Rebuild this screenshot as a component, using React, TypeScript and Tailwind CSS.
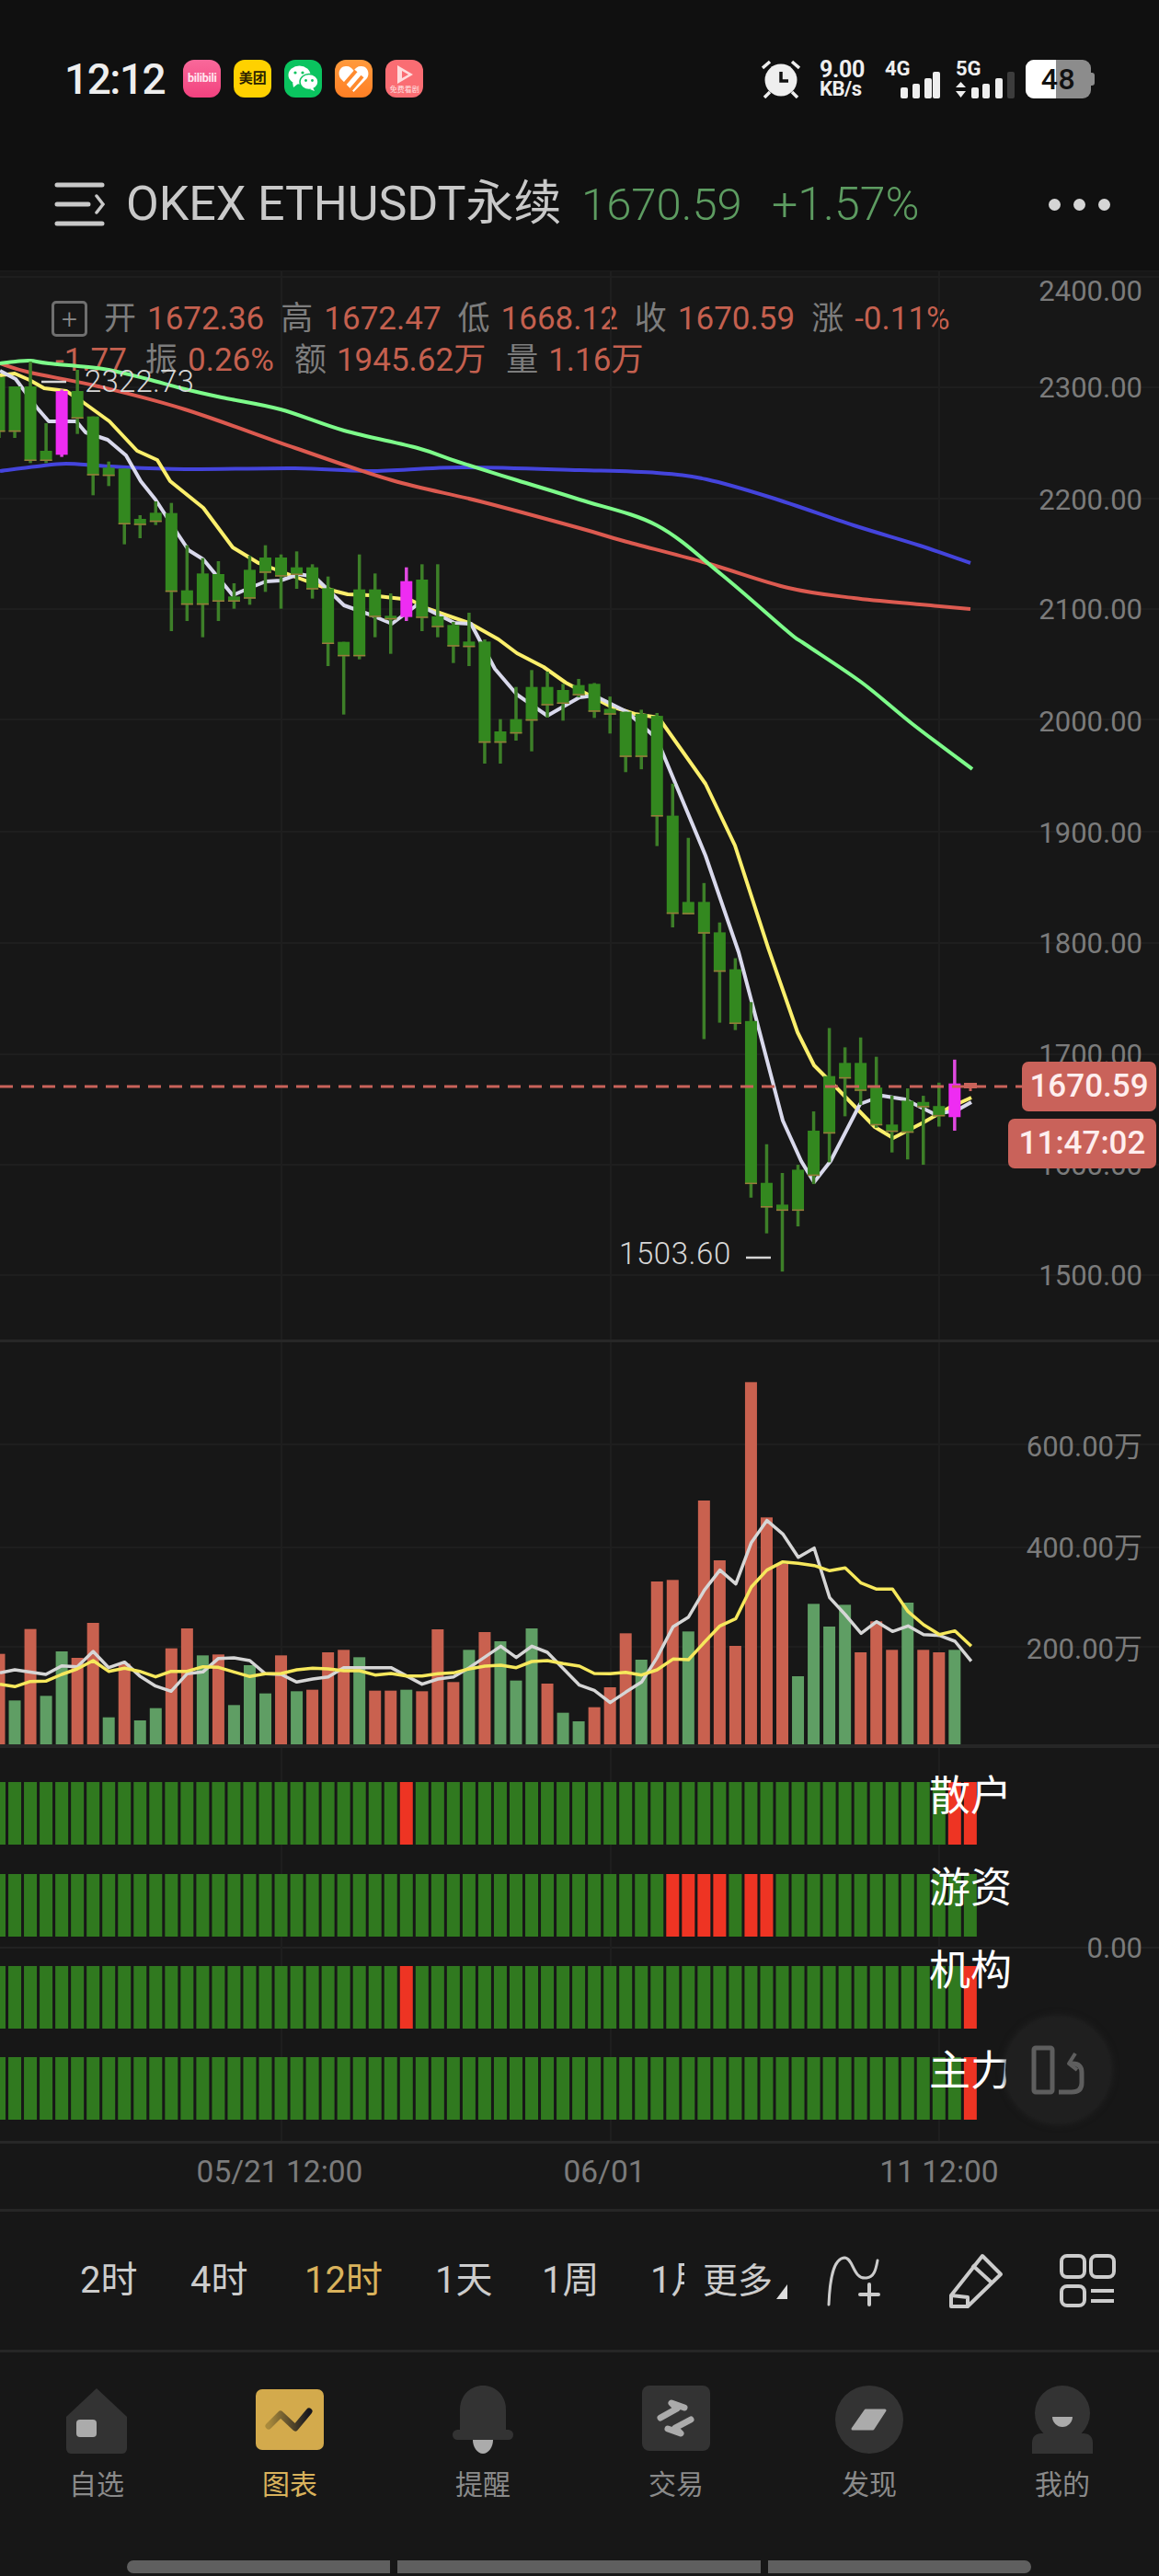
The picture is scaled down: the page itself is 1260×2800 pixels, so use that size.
import React from 'react';

// candle step in the chart, in page pixels
const STEP = 17.03;
const barX = (i: number) => -1 + STEP * i;

// [wickTop, bodyTop, bodyBottom, wickBottom], read off the reference
const upperCandles = [
  [30, 30, 208, 228], [60, 60, 208, 228], [-21, 60, 303, 310], [180, 270, 303, 310], [70, 75, 283, 290],
  [6, 75, 165, 215], [158, 158, 350, 415], [305, 325, 352, 385], [328, 328, 510, 575], [480, 492, 512, 555],
  [435, 472, 502, 512], [440, 473, 730, 858], [578, 725, 772, 825], [620, 670, 772, 878], [630, 672, 762, 825],
  [702, 745, 762, 785], [612, 658, 752, 772], [578, 618, 668, 730], [608, 618, 680, 785], [598, 650, 675, 720],
  [640, 650, 722, 752], [680, 718, 900, 972], [893, 893, 940, 1130], [608, 722, 940, 950], [670, 722, 812, 878],
  [735, 808, 820, 932], [650, 695, 812, 825], [640, 690, 815, 858], [640, 810, 845, 878], [828, 838, 908, 962],
  [798, 892, 910, 972], [885, 892, 1222, 1290], [1145, 1185, 1222, 1290], [1040, 1145, 1192, 1215], [985, 1040, 1150, 1250],
  [990, 1040, 1100, 1140], [1030, 1050, 1095, 1150],
].map((c) => c.map((y) => 400 + y / 3));

const lowerCandles = [
  [85, 100, 125, 130], [95, 97, 165, 180], [128, 158, 172, 218], [165, 165, 275, 312], [160, 170, 275, 305],
  [168, 175, 420, 492], [340, 418, 657, 690], [472, 628, 658, 658], [582, 628, 705, 962], [678, 702, 798, 922],
  [765, 792, 925, 940], [872, 918, 1315, 1348], [1218, 1312, 1372, 1435], [1288, 1365, 1380, 1528], [1268, 1280, 1380, 1418],
  [1138, 1185, 1295, 1315], [935, 1052, 1192, 1262], [982, 1020, 1058, 1150], [958, 1020, 1088, 1122], [1005, 1080, 1172, 1178],
  [1100, 1170, 1188, 1238], [1082, 1112, 1190, 1255], [1100, 1115, 1128, 1268], [1068, 1125, 1150, 1175], [1012, 1070, 1152, 1185],
].map((c) => c.map((y) => 700 + y / 2.24));

const candles = [...upperCandles, ...lowerCandles];
const MAGENTA = [4, 26, 61];

const line = (pts: number[][]) => pts.map((p) => p.join(',')).join(' ');

// catmull-rom through the points, the slow averages in the picture have no corners
const smooth = (pts: number[][]) => {
  let d = `M${pts[0][0]} ${pts[0][1]}`;
  for (let i = 0; i < pts.length - 1; i++) {
    const p0 = pts[Math.max(i - 1, 0)];
    const p1 = pts[i];
    const p2 = pts[i + 1];
    const p3 = pts[Math.min(i + 2, pts.length - 1)];
    d += `C${p1[0] + (p2[0] - p0[0]) / 6} ${p1[1] + (p2[1] - p0[1]) / 6} ${p2[0] - (p3[0] - p1[0]) / 6} ${p2[1] - (p3[1] - p1[1]) / 6} ${p2[0]} ${p2[1]}`;
  }
  return d;
};

const maGreen = [[0,395],[17,393],[33,392],[53,395],[112,401],[160,412],[197,422],[241,432],[305,445],[374,468],[454,487],[498,502],[562,522],[630,543],[714,571],[785,625],[857,687],[875,700],[937,742],[992,787],[1057,836]];
const maBlue = [[0,512],[40,507],[72,504],[120,507],[201,510],[321,509],[402,512],[502,508],[630,511],[714,514],[768,521],[839,541],[928,571],[1000,593],[1055,612]];
const maRed = [[0,395],[33,405],[107,420],[201,445],[321,487],[426,522],[522,545],[630,574],[678,588],[768,612],[857,639],[928,650],[1000,657],[1055,662]];
const maYellow = [[0,408],[16,406],[32,413],[48,422],[72,425],[90,437],[119,458],[149,490],[171,500],[185,523],[221,552],[253,595],[281,612],[321,627],[362,642],[378,646],[402,647],[446,652],[466,662],[510,677],[542,695],[562,710],[591,725],[615,742],[630,750],[662,767],[690,776],[716,780],[767,852],[799,919],[835,1030],[867,1122],[885,1158],[911,1184],[951,1225],[971,1237],[1004,1220],[1032,1204],[1056,1193]];
const maWhite = [[0,403],[17,412],[40,443],[53,458],[83,458],[93,470],[117,478],[137,495],[153,523],[169,543],[193,580],[205,598],[221,608],[253,647],[269,640],[289,632],[305,631],[325,624],[342,627],[374,658],[402,668],[426,678],[454,657],[494,677],[512,678],[538,727],[562,755],[595,778],[630,758],[646,756],[682,774],[714,803],[767,930],[803,1035],[823,1111],[851,1218],[871,1262],[885,1285],[903,1262],[935,1200],[959,1191],[984,1195],[1016,1211],[1040,1207],[1056,1198]];

const priceGrid = [421, 542, 662, 782, 904, 1025, 1146, 1266, 1386];
const priceLabels = [
  ['2400.00', 317], ['2300.00', 422], ['2200.00', 544], ['2100.00', 663], ['2000.00', 785],
  ['1900.00', 906], ['1800.00', 1026], ['1700.00', 1147], ['1600.00', 1267], ['1500.00', 1387],
] as const;

// volume tops, r = red, g = green
const volumes: [number, string][] = [
  [953,'r'],[1105,'g'],[872,'r'],[1090,'g'],[945,'g'],[966,'r'],[852,'r'],[1160,'g'],[985,'r'],[1170,'g'],
  [1130,'g'],[935,'r'],[870,'r'],[958,'g'],[955,'r'],[1120,'g'],[990,'g'],[1082,'g'],[958,'r'],[1075,'g'],
  [1070,'r'],[948,'r'],[940,'r'],[964,'g'],[1073,'r'],[1073,'r'],[1070,'g'],[1075,'r'],[873,'r'],[1045,'r'],
  [940,'g'],[882,'r'],[912,'g'],[1040,'g'],[870,'g'],[1050,'r'],[1145,'g'],[1173,'g'],[1127,'r'],[1062,'r'],
  [886,'r'],[972,'g'],[717,'r'],[712,'r'],[880,'g'],[453,'r'],[648,'r'],[927,'r'],[67,'r'],[508,'r'],
  [660,'r'],[1026,'g'],[790,'g'],[864,'g'],[793,'g'],[948,'r'],[847,'r'],[940,'r'],[786,'g'],[940,'r'],
  [948,'r'],[940,'g'],
];

const volWhiteL = [[0,1015],[40,1005],[124,1020],[167,992],[209,995],[252,945],[294,998],[337,980],[378,1025],[421,1058],[463,1075],[506,1018],[549,1012],[591,968],[633,966],[676,975],[718,1018],[761,1020],[803,1045],[846,1035],[888,1028],[930,998],[1058,998],[1142,1052],[1185,1035],[1227,1028],[1270,998],[1355,928],[1397,965],[1439,928],[1481,948],[1568,1055]];
const volWhiteR = [[40,1072],[83,1112],[125,1078],[168,1045],[210,965],[253,865],[295,833],[338,745],[380,680],[423,725],[465,590],[507,518],[550,562],[592,638],[635,608],[677,770],[719,825],[762,886],[804,848],[847,880],[889,862],[931,890],[974,893],[1016,912],[1060,977]];
const volYellowL = [[0,1052],[40,1060],[82,1043],[124,1042],[167,1020],[209,1002],[252,975],[294,1010],[337,1000],[378,1010],[421,1028],[463,1010],[506,1010],[549,995],[591,997],[633,1012],[676,1027],[718,1018],[761,1017],[803,1005],[846,1000],[888,1002],[930,1008],[973,1008],[1015,1022],[1058,1017],[1100,1025],[1142,1025],[1185,1018],[1227,1015],[1270,1002],[1312,993],[1355,990],[1397,998],[1439,978],[1481,975],[1524,985],[1568,993]];
const volYellowR = [[40,1017],[83,1018],[125,1013],[168,1022],[210,1005],[253,970],[295,972],[338,915],[380,862],[423,838],[465,735],[507,680],[550,653],[592,658],[635,665],[677,682],[719,673],[762,722],[804,742],[847,742],[889,815],[931,858],[974,890],[1016,878],[1060,928]];
const toLeft = (p: number[]) => [p[0] / 2.489, 1480 + p[1] / 3];
const toRight = (p: number[]) => [630 + p[0] / 2.489, 1480 + p[1] / 3];
const volWhite = [...volWhiteL.map(toLeft), ...volWhiteR.map(toRight)];
const volYellow = [...volYellowL.map(toLeft), ...volYellowR.map(toRight)];

const signalRows = [
  { y: 1937, label: '散户', labelCenter: 1953, red: [26, 61, 62] },
  { y: 2037, label: '游资', labelCenter: 2053, red: [43, 44, 45, 46, 48, 49] },
  { y: 2137, label: '机构', labelCenter: 2143, red: [26, 62] },
  { y: 2236, label: '主力', labelCenter: 2252, red: [62] },
];

const infoTop = [['开', '1672.36'], ['高', '1672.47'], ['低', '1668.12'], ['收', '1670.59'], ['涨', '-0.11%']];
const infoBottom = [['振', '0.26%'], ['额', '1945.62万'], ['量', '1.16万']];

function StatusBar() {
  return (
    <div className="h-[150px] pt-[65px] pl-[70px] pr-[70px] flex items-start">
      <span className="text-[46px] leading-[42px] font-medium tracking-[-1.5px] text-[#eeeeee]">12:12</span>
      <div className="ml-[20px] flex gap-[14px]">
        <div className="w-[41px] h-[41px] rounded-[12px] bg-gradient-to-b from-[#f9689a] to-[#f2417f] flex items-center justify-center text-[12.5px] font-bold text-[#ffe8f0] tracking-[-0.3px]">bilibili</div>
        <div className="w-[41px] h-[41px] rounded-[12px] bg-[#ffd100] flex items-center justify-center text-[15px] font-bold leading-none text-[#2b2200]">美团</div>
        <div className="w-[41px] h-[41px] rounded-[12px] bg-[#0ac45f] flex items-center justify-center">
          <svg width="33" height="29" viewBox="0 0 33 29">
            <ellipse cx="12.5" cy="10.5" rx="12" ry="10" fill="#fff" />
            <path d="M5 18l1 6 5-4z" fill="#fff" />
            <ellipse cx="23" cy="18" rx="10" ry="8.5" fill="#fff" stroke="#0ac45f" strokeWidth="1.5" />
            <path d="M27 24l2 4-5-2z" fill="#fff" />
            <circle cx="8" cy="8" r="1.6" fill="#0ac45f" /><circle cx="16" cy="8" r="1.6" fill="#0ac45f" />
            <circle cx="19.5" cy="16.5" r="1.4" fill="#0ac45f" /><circle cx="26.5" cy="16.5" r="1.4" fill="#0ac45f" />
          </svg>
        </div>
        <div className="w-[41px] h-[41px] rounded-[12px] bg-gradient-to-b from-[#ff9a3c] to-[#ff7f24] flex items-center justify-center">
          <svg width="33" height="30" viewBox="0 0 33 30">
            <path d="M16.5 29L2 14C-2 7 3 0 9 1c3 0 6 2 7.5 5C18 3 21 1 24 1c6-1 11 6 7 13z" fill="#fff" />
            <path d="M6 21L19 6M13 27L26 12" stroke="#ff8a2e" strokeWidth="4" />
          </svg>
        </div>
        <div className="w-[41px] h-[41px] rounded-[12px] bg-[#fa6d73] flex flex-col items-center overflow-hidden">
          <svg className="mt-[5px]" width="22" height="22" viewBox="0 0 22 22">
            <path d="M3 1l17 10L3 21z" fill="#ffdcdc" /><path d="M8 7l7 4-7 4z" fill="#fa6d73" />
          </svg>
          <span className="mt-[1px] text-[8px] leading-[10px] whitespace-nowrap text-[#ffe2e2]">免费看剧</span>
        </div>
      </div>

      <div className="ml-auto flex items-start">
        <svg width="42" height="42" viewBox="0 0 42 42">
          <circle cx="21" cy="22" r="17.5" fill="#eeeeee" />
          <path d="M21 13v10h8" stroke="#101010" strokeWidth="3.5" fill="none" />
          <path d="M1 9l8-7M41 9l-8-7M3 41l6-6M39 41l-6-6" stroke="#eeeeee" strokeWidth="3.5" />
        </svg>
        <div className="ml-[21px] w-[52px] flex flex-col font-bold text-[#eeeeee]">
          <span className="text-[25px] leading-[22px] tracking-[-0.3px]">9.00</span>
          <span className="text-[22px] leading-[20px] tracking-[-0.5px] whitespace-nowrap">KB/s</span>
        </div>
        <div className="ml-[19px] relative w-[60px] h-[42px]">
          <span className="absolute left-0 top-0 text-[22px] leading-[20px] font-bold text-[#eeeeee]">4G</span>
          <svg width="60" height="42" viewBox="0 0 60 42" fill="#eeeeee">
            <rect x="17" y="30" width="8" height="12" rx="2" /><rect x="30" y="26" width="8" height="16" rx="2" />
            <rect x="43" y="20" width="8" height="22" rx="2" /><rect x="52" y="13" width="8" height="29" rx="2" />
          </svg>
        </div>
        <div className="ml-[17px] relative w-[64px] h-[42px]">
          <span className="absolute left-0 top-0 text-[22px] leading-[20px] font-bold text-[#eeeeee]">5G</span>
          <svg width="64" height="42" viewBox="0 0 64 42" fill="#eeeeee">
            <path d="M0 30l5.500-6 5.500 6zM0 34h11l-5.500 7z" />
            <rect x="17" y="30" width="8" height="12" rx="2" /><rect x="29" y="26" width="8" height="16" rx="2" />
            <rect x="43" y="20" width="8" height="22" rx="2" /><rect x="56" y="13" width="8" height="29" rx="2" fill="#3c3c3c" />
          </svg>
        </div>
        <div className="ml-[12px] flex items-center">
          <div className="relative w-[71px] h-[42px] rounded-[9px] overflow-hidden bg-[#8c8c8c] flex items-center justify-center">
            <div className="absolute left-0 top-0 bottom-0 w-[33px] bg-white" />
            <span className="relative text-[32px] font-medium leading-none tracking-[0.5px] text-[#111111]">48</span>
          </div>
          <div className="w-[4px] h-[14px] rounded-r-[3px] bg-[#8c8c8c]" />
        </div>
      </div>
    </div>
  );
}

function Header() {
  return (
    <div className="h-[145px] pl-[59px] pr-[53px] flex items-center border-b border-[#1c1c1c]">
      <svg className="shrink-0" width="55" height="48" viewBox="0 0 55 48" fill="none" stroke="#c8c8c8" strokeWidth="5" strokeLinecap="round">
        <path d="M3 3h49M3 24h34M3 45h49" />
        <path d="M46 15l7 9-7 9" strokeWidth="3.500" />
      </svg>
      <span className="ml-[23px] w-[495px] shrink-0 whitespace-nowrap text-[52px] leading-none text-[#c9c9c9] tracking-[-0.1px]">OKEX ETHUSDT永续</span>
      <span className="w-[207px] shrink-0 text-[49px] leading-none font-light text-[#5d9c61]">1670.59</span>
      <span className="text-[50px] leading-none font-light text-[#5d9c61]">+1.57%</span>
      <div className="ml-auto flex gap-[14px]">
        <div className="w-[13px] h-[13px] rounded-full bg-[#d5d5d5]" />
        <div className="w-[13px] h-[13px] rounded-full bg-[#d5d5d5]" />
        <div className="w-[13px] h-[13px] rounded-full bg-[#d5d5d5]" />
      </div>
    </div>
  );
}

function InfoLegend() {
  return (
    <div className="absolute left-[56px] top-[29px] text-[35px] leading-[45px] text-[#c4604f]">
      <div className="flex items-center">
        <div className="w-[39px] h-[39px] mr-[18px] rounded-[5px] border-[3px] border-[#6f6f6f] flex items-center justify-center text-[30px] leading-none font-light text-[#8a8a8a]">+</div>
        {infoTop.map(([k, v]) => (
          <span key={k} className="mr-[18px] whitespace-nowrap">
            <span className="text-[#7d7d7d] mr-[12px]">{k}</span>{v}
          </span>
        ))}
      </div>
      <div className="flex items-center">
        <span className="w-[102px] pl-[4px] whitespace-nowrap">-1.77</span>
        {infoBottom.map(([k, v]) => (
          <span key={k} className="mr-[22px] whitespace-nowrap">
            <span className="text-[#7d7d7d] mr-[11px]">{k}</span>{v}
          </span>
        ))}
      </div>
    </div>
  );
}

function PriceChart() {
  return (
    <div className="relative h-[1164px] border-b-[3px] border-[#272727]">
      <InfoLegend />
      <svg className="absolute inset-0" width="1260" height="1161" viewBox="0 295 1260 1161">
        <line x1="0" x2="1260" y1="301" y2="301" stroke="#1e1e1e" strokeWidth="2" />
        {priceGrid.map((y) => <line key={y} x1="0" x2="1260" y1={y} y2={y} stroke="#1e1e1e" strokeWidth="2" />)}
        {[306, 664, 1021].map((x) => <line key={x} x1={x} x2={x} y1="295" y2="1456" stroke="#1e1e1e" strokeWidth="2" />)}
        <path d={smooth(maBlue)} fill="none" stroke="#4444dc" strokeWidth="4" />
        <path d={smooth(maRed)} fill="none" stroke="#dc5a50" strokeWidth="4" />
        <path d={smooth(maGreen)} fill="none" stroke="#7dfb8a" strokeWidth="4" />
        <polyline points={line(maYellow)} fill="none" stroke="#fbef6c" strokeWidth="4" strokeLinejoin="round" />
        <polyline points={line(maWhite)} fill="none" stroke="#d9d9ec" strokeWidth="4" strokeLinejoin="round" />
        {candles.map(([wt, bt, bb, wb], i) => {
          const x = barX(i);
          const fill = MAGENTA.includes(i) ? '#ee2cf2' : '#33881f';
          return (
            <g key={i}>
              <rect x={x - 1.75} y={wt} width="3.500" height={wb - wt} fill={MAGENTA.includes(i) ? '#e04ae0' : '#3d7f28'} />
              <rect x={x - 6.5} y={bt} width="13" height={bb - bt} fill={fill} />
              {!MAGENTA.includes(i) && <rect x={x - 6.5} y={bb - 1.5} width="13" height="1.500" fill="#9a7a3c" />}
            </g>
          );
        })}
        <line x1="0" x2="1111" y1="1181" y2="1181" stroke="#c9635a" strokeWidth="3" strokeDasharray="14 9" />
        <rect x="1048" y="1177" width="14" height="6" fill="#c9635a" />
        <rect x="1053.500" y="1183" width="3" height="3" fill="#c9635a" />
        <line x1="45" x2="72" y1="415" y2="415" stroke="#d5d5d5" strokeWidth="2.500" />
        <line x1="811" x2="838" y1="1367" y2="1367" stroke="#d5d5d5" strokeWidth="2.500" />
      </svg>

      <span className="absolute left-[92px] top-[100px] text-[33px] leading-[40px] font-light tracking-[0.2px] text-[#d6d6d6]">2322.73</span>
      <span className="absolute left-[673px] top-[1048px] text-[33px] leading-[40px] font-light tracking-[0.6px] text-[#d6d6d6]">1503.60</span>

      {priceLabels.map(([text, y]) => (
        <span key={text} className="absolute right-[18px] text-[31px] leading-[36px] text-[#7b7b7b]" style={{ top: y - 295 - 18 }}>{text}</span>
      ))}

      <div className="absolute right-[3px] top-[859px] w-[146px] h-[54px] rounded-[7px] bg-[#c9625a] flex items-center justify-center text-[35px] font-medium text-[#ffeeee]">1670.59</div>
      <div className="absolute right-[3px] top-[921px] w-[161px] h-[54px] rounded-[7px] bg-[#c9625a] flex items-center justify-center text-[35px] font-medium text-[#ffeeee]">11:47:02</div>
    </div>
  );
}

function VolumeChart() {
  return (
    <div className="relative h-[441px] border-b-[4px] border-[#262626]">
      <svg className="absolute inset-0" width="1260" height="437" viewBox="0 1459 1260 437">
        {[1570, 1682, 1790].map((y) => <line key={y} x1="0" x2="1260" y1={y} y2={y} stroke="#1e1e1e" strokeWidth="2" />)}
        {[306, 664, 1021].map((x) => <line key={x} x1={x} x2={x} y1="1459" y2="1896" stroke="#1e1e1e" strokeWidth="2" />)}
        {volumes.map(([top, color], i) => {
          const y = 1480 + top / 3;
          return <rect key={i} x={barX(i) - 6.5} y={y} width="13" height={1896 - y} fill={color === 'r' ? '#c9614f' : '#5f9e64'} />;
        })}
        <polyline points={line(volWhite)} fill="none" stroke="#d6d6d6" strokeWidth="3.500" strokeLinejoin="round" />
        <polyline points={line(volYellow)} fill="none" stroke="#f6e85c" strokeWidth="3.500" strokeLinejoin="round" />
      </svg>
      <span className="absolute right-[18px] top-[94px] text-[31px] leading-[40px] text-[#7b7b7b]">600.00万</span>
      <span className="absolute right-[18px] top-[204px] text-[31px] leading-[40px] text-[#7b7b7b]">400.00万</span>
      <span className="absolute right-[18px] top-[314px] text-[31px] leading-[40px] text-[#7b7b7b]">200.00万</span>
    </div>
  );
}

function SignalChart() {
  return (
    <div className="relative h-[430px] border-b-[3px] border-[#272727]">
      <svg className="absolute inset-0" width="1260" height="427" viewBox="0 1900 1260 427">
        <line x1="0" x2="1260" y1="2117" y2="2117" stroke="#222222" strokeWidth="2" />
        {[306, 664, 1021].map((x) => <line key={x} x1={x} x2={x} y1="1900" y2="2327" stroke="#1e1e1e" strokeWidth="2" />)}
        {signalRows.map((row) =>
          Array.from({ length: 63 }, (_, i) => (
            <rect key={`${row.y}-${i}`} x={barX(i) - 7} y={row.y} width="14" height="68" fill={row.red.includes(i) ? '#ee3423' : '#30791f'} />
          )),
        )}
      </svg>
      {signalRows.map((row) => (
        <span key={row.label} className="absolute left-[1010px] text-[45px] leading-[50px] text-white" style={{ top: row.labelCenter - 1900 - 25 }}>{row.label}</span>
      ))}
      <span className="absolute right-[18px] top-[200px] text-[31px] leading-[36px] text-[#7b7b7b]">0.00</span>
      <div className="absolute left-[1093px] top-[293px] w-[114px] h-[114px] rounded-full bg-[#1f1f1f] shadow-[0_0_10px_#2a2a2a] flex items-center justify-center">
        <svg width="58" height="54" viewBox="0 0 58 54" fill="none" stroke="#5e5e5e" strokeWidth="5" strokeLinejoin="round">
          <rect x="3" y="3" width="20" height="48" rx="2" />
          <path d="M30 51h14c8 0 11-4 11-10V30c0-6-3-10-10-10H42" />
          <path d="M48 9l-7 11 9 7" strokeWidth="4" />
        </svg>
      </div>
    </div>
  );
}

function TimeAxis() {
  return (
    <div className="relative h-[74px] border-b-[3px] border-[#262626] text-[33.500px] leading-[36px] text-[#7b7b7b]">
      <span className="absolute left-[304px] top-[13px] -translate-x-1/2 whitespace-nowrap">05/21 12:00</span>
      <span className="absolute left-[657px] top-[13px] -translate-x-1/2 whitespace-nowrap">06/01</span>
      <span className="absolute left-[1021px] top-[13px] -translate-x-1/2 whitespace-nowrap">11 12:00</span>
    </div>
  );
}

function Toolbar() {
  return (
    <div className="h-[153px] border-b-[3px] border-[#262626] flex items-center pl-[87px] text-[40px] leading-none text-[#cccccc]">
      <span className="w-[120px] shrink-0">2时</span>
      <span className="w-[124px] shrink-0">4时</span>
      <span className="w-[142px] shrink-0 text-[#d9b25c]">12时</span>
      <span className="w-[116px] shrink-0">1天</span>
      <span className="w-[118px] shrink-0">1周</span>
      <span className="w-[37px] shrink-0 overflow-hidden whitespace-nowrap">1月</span>
      <span className="ml-[20px] shrink-0 text-[38px]">更多</span>
      <svg className="ml-[4px] mt-[24px] shrink-0" width="12" height="16" viewBox="0 0 12 16"><path d="M12 0v16H0z" fill="#dddddd" /></svg>
      <svg className="ml-[43px] shrink-0" width="58" height="56" viewBox="0 0 58 56" fill="none" stroke="#cccccc" strokeWidth="4" strokeLinecap="round">
        <path d="M2 54C3 30 6 4 19 3c10 0 9 24 24 22 8-1 10-8 12-19" strokeWidth="3" />
        <path d="M46 32v22M36 43h20" />
      </svg>
      <svg className="ml-[74px] shrink-0" width="60" height="60" viewBox="0 0 60 60" fill="none" stroke="#cccccc" strokeWidth="4" strokeLinejoin="round">
        <path d="M37 3l20 20-36 35H3V46zM26 13l22 20M3 46l18 2v10" />
      </svg>
      <svg className="ml-[60px] shrink-0" width="62" height="60" viewBox="0 0 62 60" fill="none" stroke="#cccccc" strokeWidth="4">
        <rect x="3" y="3" width="25" height="23" rx="6" /><rect x="35" y="3" width="25" height="23" rx="6" />
        <rect x="3" y="36" width="25" height="21" rx="6" /><path d="M35 41h25M35 52h25" />
      </svg>
    </div>
  );
}

const ICON = '#333333';
const INNER = '#ababab';

const navItems: { label: string; active?: boolean; icon: React.ReactNode }[] = [
  {
    label: '自选',
    icon: (
      <svg width="66" height="74" viewBox="0 0 66 74">
        <path d="M33 3L66 34v34c0 3-2 6-5 6H5c-3 0-5-3-5-6V34z" fill={ICON} />
        <rect x="11" y="37" width="22" height="19" rx="4" fill={INNER} />
      </svg>
    ),
  },
  {
    label: '图表',
    active: true,
    icon: (
      <svg width="74" height="74" viewBox="0 0 74 74">
        <defs>
          <linearGradient id="zig" x1="0" x2="1" y1="0" y2="0">
            <stop offset="0" stopColor="#a98a3c" /><stop offset="1" stopColor="#16161e" />
          </linearGradient>
        </defs>
        <rect x="0" y="4" width="74" height="66" rx="7" fill="#d3aa4c" />
        <path d="M14 44L27 31L43 46L58 28" fill="none" stroke="url(#zig)" strokeWidth="7" strokeLinecap="round" strokeLinejoin="round" />
      </svg>
    ),
  },
  {
    label: '提醒',
    icon: (
      <svg width="66" height="74" viewBox="0 0 66 74">
        <path d="M8 52V26C8 10 20 0 33 0s25 10 25 26v26z" fill={ICON} />
        <rect x="0" y="48" width="66" height="11" rx="5.500" fill={ICON} />
        <path d="M22 59h22c0 8-5 15-11 15s-11-7-11-15z" fill={INNER} />
      </svg>
    ),
  },
  {
    label: '交易',
    icon: (
      <svg width="74" height="74" viewBox="0 0 74 74">
        <rect x="0" y="0" width="74" height="71" rx="8" fill={ICON} />
        <path d="M20 35L38 25L32 19L46 24M53 37L36 46L42 52L28 47" fill="none" stroke={INNER} strokeWidth="7" strokeLinejoin="round" strokeLinecap="round" />
      </svg>
    ),
  },
  {
    label: '发现',
    icon: (
      <svg width="74" height="74" viewBox="0 0 74 74">
        <circle cx="37" cy="37" r="37" fill={ICON} />
        <path d="M19 47L33 27H54L41 47z" fill={INNER} stroke={INNER} strokeWidth="3" strokeLinejoin="round" />
      </svg>
    ),
  },
  {
    label: '我的',
    icon: (
      <svg width="66" height="74" viewBox="0 0 66 74">
        <circle cx="33" cy="30" r="30" fill={ICON} />
        <path d="M10 52h46c6 0 10 4 10 10v12H0V62c0-6 4-10 10-10z" fill={ICON} />
        <path d="M22 34h22c0 6-5 11-11 11s-11-5-11-11z" fill={INNER} />
      </svg>
    ),
  },
];

function BottomNav() {
  return (
    <div className="flex-1 flex flex-col">
      <div className="pt-[36px] grid grid-cols-6">
        {navItems.map((item) => (
          <div key={item.label} className="flex flex-col items-center">
            <div className="h-[74px] flex items-center">{item.icon}</div>
            <span className={`mt-[17px] text-[30px] leading-[34px] ${item.active ? 'text-[#d9b25c]' : 'text-[#8a8a8a]'}`}>{item.label}</span>
          </div>
        ))}
      </div>
      <div className="mt-auto mb-[3px] pl-[138px] flex gap-[8px]">
        <div className="w-[286px] h-[14px] rounded-l-[7px] bg-[#5f5f5f]" />
        <div className="w-[395px] h-[14px] bg-[#5f5f5f]" />
        <div className="w-[286px] h-[14px] rounded-r-[7px] bg-[#5f5f5f]" />
      </div>
    </div>
  );
}

export default function App() {
  return (
    <div className="w-[1260px] h-[2800px] overflow-hidden flex flex-col bg-[#171717] [font-family:Roboto,'Noto_Sans_CJK_SC',sans-serif]">
      <div className="bg-[#101010]">
        <StatusBar />
        <Header />
      </div>
      <PriceChart />
      <VolumeChart />
      <SignalChart />
      <TimeAxis />
      <Toolbar />
      <BottomNav />
    </div>
  );
}
